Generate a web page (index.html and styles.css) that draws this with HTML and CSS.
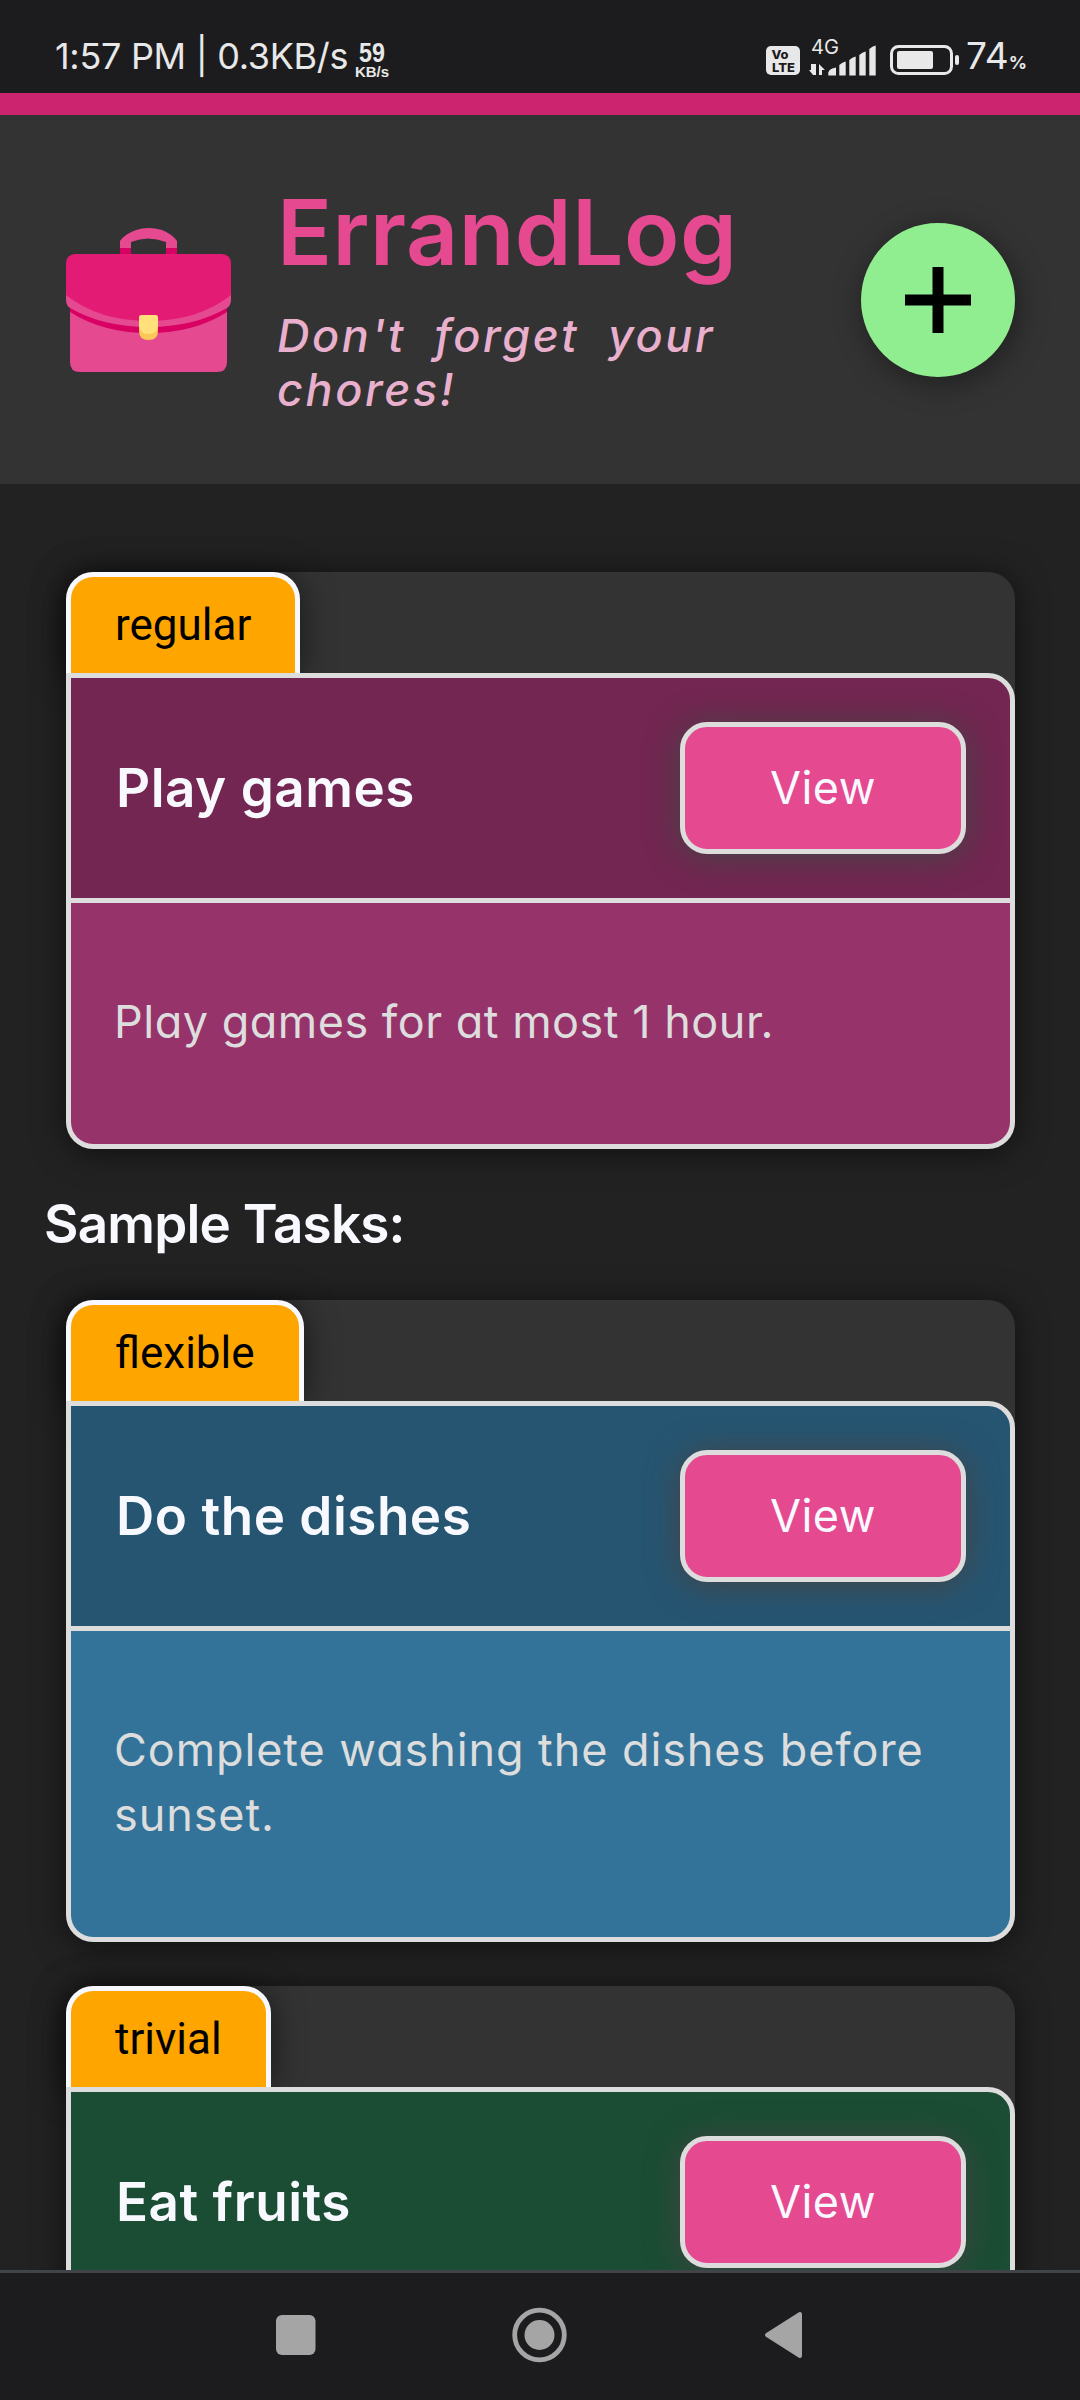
FILE: index.html
```html
<!DOCTYPE html>
<html lang="en">
<head>
<meta charset="utf-8">
<title>ErrandLog</title>
<link rel="stylesheet" href="styles.css">
</head>
<body>
<div class="screen">
  <div class="status">
    <span class="clock">1:57 PM | 0.3KB/s</span>
    <span class="speed"><b>59</b><small>KB/s</small></span>
    <svg class="indicators" width="200" height="50" viewBox="760 30 200 50" fill="#e8e8e8">
      <rect x="766" y="46" width="34" height="29" rx="5"/>
      <g fill="#1c1c1e" font-family="Inter, sans-serif" font-weight="800">
        <text x="771.5" y="59" font-size="12" textLength="17" lengthAdjust="spacingAndGlyphs">Vo</text>
        <text x="772" y="71.500" font-size="12" textLength="23" lengthAdjust="spacingAndGlyphs">LTE</text>
      </g>
      <text x="811" y="54" font-family="Inter, sans-serif" font-size="20" textLength="28" lengthAdjust="spacingAndGlyphs">4G</text>
      <path d="M813 64v11l-4-5h2v-6zM813 64h3v11h-3zM819 64l6 6h-3v5h-3z"/>
      <path d="M828.300 75.500v-3q1-4 7.700-5v8zM839.300 75.500V65q3-3 6.400-3.500v14zM849.300 75.500V60q3-3 6.400-3.500v19zM859.300 75.500V55q3-3 6.400-3.500v24zM869.300 75.500V49q3-3 6.400-3.500v30z"/>
      <rect x="891.500" y="46.500" width="60" height="27" rx="7" fill="none" stroke="#e8e8e8" stroke-width="3"/>
      <rect x="897" y="51" width="36" height="18" rx="2"/>
      <rect x="955" y="55" width="4" height="10" rx="2"/>
    </svg>
    <span class="charge">74<small>%</small></span>
  </div>

  <header class="header">
    <svg class="logo" width="165" height="146" viewBox="0 0 165 146">
      <path d="M54 30V14Q59 7 70 3q12-4 26 0q10 4 15 11V30H100V15Q82 8 65 15V30Z" fill="#e5498f"/>
      <path d="M54 21h11v7H54zM100 21h11v7h-11z" fill="#d90064"/>
      <path d="M4 70h157v65q0 10-10 10H14q-10 0-10-10z" fill="#e5498f"/>
      <path d="M4 76h157v9Q128 106 82.500 106Q37 106 4 85z" fill="#d90064"/>
      <path d="M0 65h165v8q0 5-4 8Q128 100 82.500 100Q37 100 4 81Q0 78 0 73z" fill="#e5498f"/>
      <path d="M0 37Q0 27 10 27H155Q165 27 165 37V68Q132 94 82.500 94Q33 94 0 68Z" fill="#e31b74"/>
      <path d="M73 91q0-3 3-3h13q3 0 3 3v13q0 9-9.500 9T73 104z" fill="#fbc757"/>
      <path d="M73 91q0-3 3-3h13q3 0 3 3v7q0 9-9.500 9T73 98z" fill="#ffe07a"/>
    </svg>
    <div class="brand">
      <h1 class="title">ErrandLog</h1>
      <p class="tagline">Don't forget your<br>chores!</p>
    </div>
    <button class="add" aria-label="Add task">
      <svg width="66" height="66" viewBox="0 0 66 66"><path d="M33 0v66M0 33h66" stroke="#000" stroke-width="11"/></svg>
    </button>
  </header>

  <main class="tasks">
    <article class="card plum">
      <span class="tab">regular</span>
      <div class="head"><h2 class="name">Play games</h2><button class="view">View</button></div>
      <p class="body">Play games for at most 1 hour.</p>
    </article>
    <h2 class="section">Sample Tasks:</h2>
    <article class="card blue">
      <span class="tab">flexible</span>
      <div class="head"><h2 class="name">Do the dishes</h2><button class="view">View</button></div>
      <p class="body">Complete washing the dishes before<br>sunset.</p>
    </article>
    <article class="card green">
      <span class="tab">trivial</span>
      <div class="head"><h2 class="name">Eat fruits</h2><button class="view">View</button></div>
      <p class="body"></p>
    </article>
  </main>

  <nav class="nav">
    <svg width="1080" height="127" viewBox="0 2273 1080 127" fill="#a5a5a5">
      <rect x="276" y="2315" width="39.500" height="40" rx="6"/>
      <circle cx="539.500" cy="2335" r="24.800" fill="none" stroke="#a5a5a5" stroke-width="4.800"/>
      <circle cx="539.500" cy="2335" r="15"/>
      <path d="M767 2335l33-21v42z" stroke="#a5a5a5" stroke-width="4" stroke-linejoin="round"/>
    </svg>
  </nav>
</div>
</body>
</html>
```
FILE: styles.css
```css
* { box-sizing: border-box; }
body { margin: 0; background: #222; }
h1, h2, p { margin: 0; }
button { padding: 0; font: inherit; }
svg { display: block; }

.screen {
  width: 1080px;
  height: 2400px;
  display: flex;
  flex-direction: column;
  overflow: hidden;
  font-family: Inter, "Open Sans", sans-serif;
  color: #f8f8ff;
}

.status {
  flex: none;
  height: 93px;
  padding: 30px 0 0 55px;
  display: flex;
  background: #1c1c1e;
  color: #e8e8e8;
}
.clock { width: 296px; font-size: 36px; line-height: 52px; letter-spacing: -.3px; white-space: nowrap; }
.speed { width: 42px; padding-top: 11px; text-align: center; font-family: "Liberation Sans", sans-serif; font-weight: 700; }
.speed b { display: block; font-size: 27px; line-height: 24px; transform: scaleX(.86); }
.speed small { display: block; font-size: 15px; line-height: 14px; }
.indicators { margin-left: 367px; }
.charge { margin-left: 6px; font-size: 37px; line-height: 52px; white-space: nowrap; }
.charge small { font-size: 18px; font-weight: 700; }

.header {
  flex: none;
  height: 391px;
  border-top: 22px solid #cc246e;
  background: #333;
  padding: 0 65px 0 66px;
  display: flex;
  align-items: center;
}
.brand { flex: 1; margin-left: 46px; padding-bottom: 5px; }
.title { font-size: 91px; line-height: 110px; font-weight: 600; color: #e5498f; letter-spacing: .5px; }
.tagline { margin-top: 22px; font-size: 45px; line-height: 54px; font-weight: 500; font-style: italic; color: #e8b0cd; letter-spacing: 2.6px; word-spacing: 14px; white-space: nowrap; }
.add {
  width: 154px;
  height: 154px;
  border: 0;
  border-radius: 50%;
  background: #90ee90;
  display: grid;
  place-items: center;
  box-shadow: 3px 6px 30px rgba(0, 0, 0, .4);
}

.tasks { flex: 1; min-height: 0; overflow: hidden; padding: 88px 65px 0 66px; }
.card { border-radius: 27px; background: #333; box-shadow: 0 3px 33px rgba(0, 0, 0, .55); }
.card + .card { margin-top: 44px; }
.tab {
  display: block;
  width: max-content;
  height: 101px;
  padding: 0 44px;
  border: 5px solid #f8f8ff;
  border-bottom: 0;
  border-radius: 27px 27px 0 0;
  background: orange;
  color: #000;
  font: 44px/97px Roboto, sans-serif;
  box-shadow: 0 3px 33px rgba(0, 0, 0, .55);
}
.head {
  position: relative;
  height: 230px;
  padding: 0 44px 0 45px;
  border: 5px solid #ddd;
  border-radius: 0 27px 0 0;
  display: flex;
  justify-content: space-between;
  align-items: center;
  background: #722651;
}
.name, .section { font-size: 53px; line-height: 66px; font-weight: 600; letter-spacing: .5px; white-space: nowrap; }
.view {
  width: 286px;
  height: 132px;
  padding-bottom: 2px;
  border: 5px solid #ddd;
  border-radius: 27px;
  background: #e5498f;
  color: #f8f8ff;
  font-size: 45px;
  letter-spacing: .4px;
  font-feature-settings: "cv11";
  box-shadow: 0 3px 33px #444;
}
.body {
  min-height: 246px;
  padding: 86px 43px 90px;
  border: 5px solid #ddd;
  border-top: 0;
  border-radius: 0 0 27px 27px;
  background: #97336b;
  color: #ddd;
  font-size: 45px;
  line-height: 65px;
  letter-spacing: .5px;
  font-feature-settings: "cv11";
  white-space: nowrap;
}
.blue .head { background: #265572; }
.blue .body { background: #337399; letter-spacing: .9px; }
.green .head { background: #1a4d33; }
.green .body { background: #267349; }
.section { margin: 42px 0 43px -22px; letter-spacing: -.8px; }

.nav { flex: none; height: 130px; border-top: 3px solid #414448; background: #1c1c1e; }
```
